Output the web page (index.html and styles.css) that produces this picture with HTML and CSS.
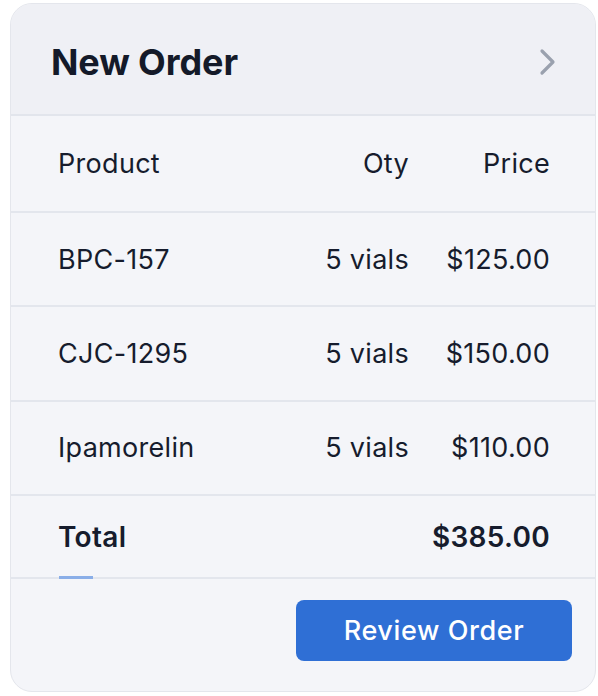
FILE: index.html
```html
<!DOCTYPE html>
<html lang="en">
<head>
    <meta charset="UTF-8">
    <title>New Order</title>
    <link rel="stylesheet" href="styles.css">
</head>
<body>

<div class="order_card">
    <div class="order_header">
        <h1>New Order</h1>
        <svg class="chevron" width="18" height="28" viewBox="0 0 18 28">
            <path d="M3 3 L14 14 L3 25" fill="none" stroke="#9aa1ae" stroke-width="3.2" stroke-linecap="round" stroke-linejoin="round"/>
        </svg>
    </div>

    <div class="order_row head_row">
        <span>Product</span>
        <span class="num">Oty</span>
        <span class="num">Price</span>
    </div>
    <div class="order_row">
        <span>BPC-157</span>
        <span class="num">5 vials</span>
        <span class="num">$125.00</span>
    </div>
    <div class="order_row">
        <span>CJC-1295</span>
        <span class="num">5 vials</span>
        <span class="num">$150.00</span>
    </div>
    <div class="order_row">
        <span>Ipamorelin</span>
        <span class="num">5 vials</span>
        <span class="num">$110.00</span>
    </div>
    <div class="order_row total_row">
        <span>Total</span>
        <span></span>
        <span class="num">$385.00</span>
    </div>

    <div class="order_footer">
        <button class="review_button">Review Order</button>
    </div>
</div>

</body>
</html>
```

FILE: styles.css
```css
html, body {
    margin: 0;
    padding: 0;
    background-color: #ffffff;
}

body {
    font-family: Inter, "Open Sans", sans-serif;
    color: #141b2d;
    padding: 3px 2px 4px 10px;
}

.order_card {
    box-sizing: border-box;
    width: 586px;
    height: 689px;
    border: 1px solid #e4e6ec;
    border-radius: 22px;
    background-color: #f4f5f9;
    overflow: hidden;
    display: flex;
    flex-direction: column;
}

.order_header {
    box-sizing: border-box;
    height: 112px;
    flex-shrink: 0;
    display: flex;
    align-items: center;
    justify-content: space-between;
    padding: 6px 38px 0 40px;
    background-color: #eff0f5;
    border-bottom: 2px solid #e2e5ec;
}

.order_header h1 {
    margin: 0;
    font-size: 36px;
    font-weight: 700;
    letter-spacing: -0.1px;
    color: #141a29;
}

.order_row {
    display: grid;
    grid-template-columns: 1fr 100px 141px;
    align-items: center;
    flex-shrink: 0;
    height: 92.4px;
    padding: 0 45px 0 47px;
    border-bottom: 2px solid #e3e6ed;
    font-size: 27px;
    letter-spacing: 0.3px;
    color: #161c2d;
}

.order_row .num {
    text-align: right;
}

.head_row {
    height: 95px;
}

.total_row {
    position: relative;
    height: 81px;
    font-weight: 600;
    font-size: 28px;
    letter-spacing: 0.3px;
}

.total_row::after {
    content: "";
    position: absolute;
    left: 48px;
    bottom: -2px;
    width: 34px;
    height: 3px;
    background-color: #8aaee8;
}

.order_footer {
    flex: 1;
    display: flex;
    justify-content: flex-end;
    align-items: flex-start;
    padding: 21px 23px 0 0;
}

.review_button {
    width: 276px;
    height: 61px;
    border: none;
    border-radius: 8px;
    background-color: #2f6fd5;
    color: #ffffff;
    font-family: inherit;
    font-size: 27px;
    font-weight: 500;
    letter-spacing: 0.6px;
}
```
